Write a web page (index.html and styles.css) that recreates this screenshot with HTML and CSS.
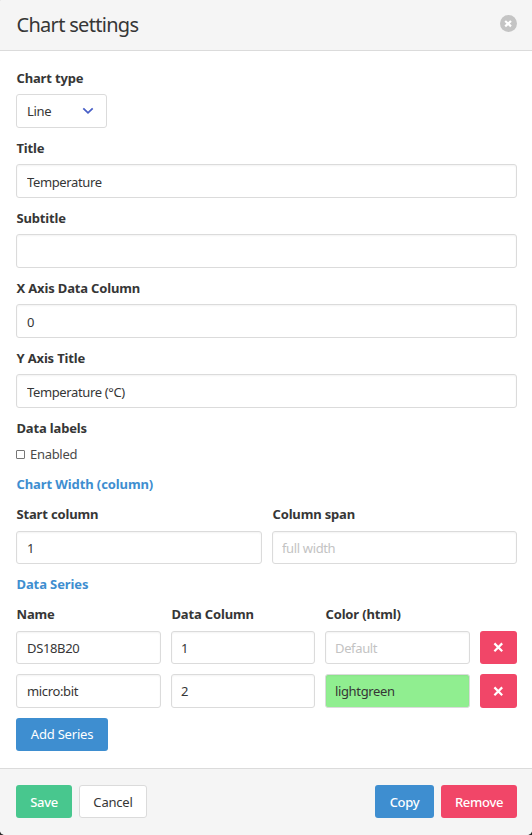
FILE: index.html
```html
<!DOCTYPE html>
<html lang="en">
<head>
<meta charset="utf-8">
<title>Chart settings</title>
<link rel="stylesheet" href="styles.css">
</head>
<body>
<div class="modal">
  <header class="modal-head">
    <h1 class="modal-title">Chart settings</h1>
    <button class="close" aria-label="Close"><svg width="17" height="17" viewBox="0 0 17 17"><path d="M5.2 6L11 11.4M11 6L5.2 11.4" stroke="#fff" stroke-width="2.2" fill="none"/></svg></button>
  </header>
  <main class="modal-body">
    <div class="field">
      <label class="label">Chart type</label>
      <div class="select">Line<svg class="chevron" width="12" height="8" viewBox="0 0 12 8"><path d="M1.3 1.3L6 5.8L10.7 1.3" fill="none" stroke="#485fc7" stroke-width="1.8"/></svg></div>
    </div>
    <div class="field"><label class="label">Title</label><input class="input" value="Temperature"></div>
    <div class="field"><label class="label">Subtitle</label><input class="input"></div>
    <div class="field"><label class="label">X Axis Data Column</label><input class="input" value="0"></div>
    <div class="field"><label class="label">Y Axis Title</label><input class="input" value="Temperature (°C)"></div>
    <div class="field"><span class="label">Data labels</span><label class="checkbox"><input class="box" type="checkbox">Enabled</label></div>
    <h2 class="section">Chart Width (column)</h2>
    <div class="pair">
      <div><label class="label short">Start column</label><input class="input short-input" value="1"></div>
      <div><label class="label short">Column span</label><input class="input short-input inset" placeholder="full width"></div>
    </div>
    <h2 class="section">Data Series</h2>
    <div class="series labels"><span class="label">Name</span><span class="label">Data Column</span><span class="label">Color (html)</span></div>
    <div class="series first">
      <input class="input" value="DS18B20"><input class="input inset" value="1"><input class="input inset" placeholder="Default">
      <button class="button danger" aria-label="Remove series"><svg width="11" height="11" viewBox="0 0 11 11"><path d="M1.4 1.4L9.2 9.2M9.2 1.4L1.4 9.2" stroke="#fff" stroke-width="2.2"/></svg></button>
    </div>
    <div class="series second">
      <input class="input" value="micro:bit"><input class="input inset" value="2"><input class="input inset green" value="lightgreen">
      <button class="button danger" aria-label="Remove series"><svg width="11" height="11" viewBox="0 0 11 11"><path d="M1.4 1.4L9.2 9.2M9.2 1.4L1.4 9.2" stroke="#fff" stroke-width="2.2"/></svg></button>
    </div>
    <button class="button primary add">Add Series</button>
  </main>
  <footer class="modal-foot">
    <button class="button success save">Save</button>
    <button class="button plain cancel">Cancel</button>
    <span class="spacer"></span>
    <button class="button primary copy">Copy</button>
    <button class="button danger remove">Remove</button>
  </footer>
</div>
</body>
</html>
```
FILE: styles.css
```css
* { box-sizing: border-box; margin: 0; }
body { background: #2b2b2b; }
body, input, button { font-family: "Noto Sans", "Open Sans", sans-serif; font-size: 13px; color: #363636; }
.modal { width: 532px; height: 835px; display: flex; flex-direction: column; background: #fff; border-radius: 1px 0 5px 5px; overflow: hidden; }
.modal-head { height: 51px; padding: 0 15px 3px 16px; display: flex; align-items: center; justify-content: space-between; background: #f5f5f5; border-bottom: 1px solid #dbdbdb; }
.modal-title { font-size: 20px; font-weight: 400; line-height: 24px; letter-spacing: -0.7px; padding: 2px 0 0 0.5px; }
.close { width: 17px; height: 17px; padding: 0; border: 0; border-radius: 50%; background: #c4c4c4; }
.close svg, .chevron { display: block; }
.modal-body { flex: 1; padding: 17px 15px 0 16px; }
.field { margin-bottom: 10px; }
.label { display: block; height: 20px; line-height: 20px; margin-bottom: 6px; padding-left: 0.5px; font-weight: 700; letter-spacing: -0.16px; }
.input { display: block; width: 100%; height: 34px; padding: 2px 10px 0; border: 1px solid #dbdbdb; border-radius: 3px; background: #fff; box-shadow: inset 0 1px 2px rgba(10, 10, 10, .05); outline: 0; letter-spacing: -0.36px; }
.input::placeholder { color: #c3c3c3; }
.select { width: 91px; height: 34px; padding: 0 12px 0 10px; display: flex; align-items: center; justify-content: space-between; border: 1px solid #dbdbdb; border-radius: 3px; letter-spacing: -0.3px; }
.checkbox { display: flex; align-items: center; gap: 5px; height: 20px; color: #4a4a4a; letter-spacing: -0.3px; }
.box { appearance: none; width: 9px; height: 9px; border: 1px solid #767676; border-radius: 1px; background: #fff; }
.section { height: 20px; margin-bottom: 10px; padding-left: 0.5px; font-size: 13px; line-height: 20px; font-weight: 700; color: #3e8ed0; letter-spacing: -0.1px; }
.pair { display: grid; grid-template-columns: 246px 245px; gap: 10px; margin-bottom: 10px; }
.short { margin-bottom: 7px; }
.short-input { height: 33px; padding-top: 1px; }
.inset { padding-left: 9px; }
.series { display: grid; grid-template-columns: 145px 144px 145px 37px; gap: 10px; }
.labels .label { margin-bottom: 7px; }
.series .input, .series .button { height: 100%; padding-top: 0; }
.first { height: 33px; margin-bottom: 10px; }
.second { height: 34px; margin-bottom: 10px; }
.green { background: #90ee90; }
.button { display: flex; align-items: center; justify-content: center; height: 33px; padding: 1px 0 0; border: 0; border-radius: 3px; color: #fff; letter-spacing: -0.2px; }
.primary { background: #3e8ed0; }
.danger { background: #f14668; }
.success { background: #48c78e; }
.plain { background: #fff; border: 1px solid #dbdbdb; color: #363636; }
.add { width: 92px; padding-top: 0; padding-bottom: 1px; }
.modal-foot { height: 67px; padding: 16px 15px 0 16px; display: flex; gap: 7px; background: #f5f5f5; border-top: 1px solid #dbdbdb; }
.spacer { flex: 1; margin: 0 -7px 0 0; }
.save { width: 56px; }
.cancel { width: 68px; }
.copy { width: 59px; }
.remove { width: 76px; }
.save, .copy, .remove { font-weight: 500; letter-spacing: -0.3px; }
```
